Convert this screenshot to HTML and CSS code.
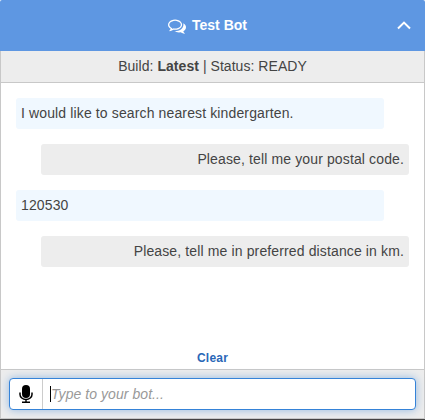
FILE: index.html
```html
<!DOCTYPE html>
<html lang="en">
<head>
<meta charset="utf-8">
<title>Test Bot</title>
<link rel="stylesheet" href="styles.css">
</head>
<body>
<div class="widget">
  <header class="header">
    <svg class="chat-icon" viewBox="0 0 1792 1792"><path d="M704 384q-153 0-286 52t-211.500 141-78.500 191q0 82 53 158t149 132l97 56-35 84q34-20 62-39l44-31 53 10q78 14 153 14 153 0 286-52t211.500-141 78.500-191-78.500-191-211.500-141-286-52zm0-128q191 0 353.500 68.500t256.500 186.500 94 257-94 257-256.500 186.500-353.500 68.500q-86 0-176-16-124 88-278 128-36 9-86 16h-3q-11 0-20.500-8t-11.500-21q-1-3-1-6.500t.5-6.500 2-6l2.500-5 3.500-5.500 4-5 4.500-5 4-4.500q5-6 23-25t26-29.500 22.500-29 25-38.500 20.500-44q-124-72-195-177t-71-224q0-139 94-257t256.500-186.500 353.500-68.500zm822 1169q10 24 20.500 44t25 38.500 22.500 29 26 29.500 23 25q1 1 4 4.500t4.500 5 4 5 3.500 5.500l2.500 5 2 6 .5 6.500-1 6.500q-3 14-13 22t-22 7q-50-7-86-16-154-40-278-128-90 16-176 16-271 0-472-132 58 4 88 4 161 0 309-45t264-129q125-92 192-212t67-254q0-77-23-152 129 71 204 178t75 230q0 120-71 224.500t-195 176.500z"/></svg>
    <span class="title">Test Bot</span>
    <svg class="chevron" viewBox="0 0 14 9"><path d="M1 7.500 7 1.600l6 5.900"/></svg>
  </header>
  <div class="status">Build: <b>Latest</b> | Status: READY</div>
  <main class="messages">
    <div class="message user">I would like to search nearest kindergarten.</div>
    <div class="message bot">Please, tell me your postal code.</div>
    <div class="message user number">120530</div>
    <div class="message bot">Please, tell me in preferred distance in km.</div>
    <a class="clear">Clear</a>
  </main>
  <footer class="footer">
    <div class="input">
      <div class="mic"><svg viewBox="0 0 14 19"><rect x="3" y="0" width="8" height="13" rx="4"/><path class="stand" d="M1 7.500v2a6 5 0 0 0 12 0v-2M7 14.500v3M3 17.300h8"/></svg></div>
      <div class="field"><span class="caret"></span>Type to your bot...</div>
    </div>
  </footer>
</div>
</body>
</html>
```
FILE: styles.css
```css
* { box-sizing: border-box; }
body {
  margin: 0;
  background: #fff;
  color: #444;
  font: 14px/21px "Liberation Sans", Arial, sans-serif;
  overflow: hidden;
}
.widget {
  display: flex;
  flex-direction: column;
  width: 425px;
  height: 420px;
  border-bottom: 1px solid #444;
}
.header {
  display: grid;
  grid-template-columns: 18px 1fr 14px;
  column-gap: 6px;
  align-items: center;
  height: 51px;
  padding: 0 14px 0 168px;
  background: #5e97e2;
  color: #fff;
  border-radius: 2px 2px 0 0;
}
.chat-icon { width: 18px; height: 18px; fill: #fff; }
.title { font-weight: bold; line-height: 20px; padding-bottom: 1px; }
.chevron { width: 14px; height: 9px; fill: none; stroke: #fff; stroke-width: 2; }
.status {
  height: 32px;
  padding-top: 5px;
  text-align: center;
  letter-spacing: .05px;
  background: #ededed;
  border: 1px solid #c8c8c8;
  border-top: 0;
}
.messages {
  display: flex;
  flex-direction: column;
  gap: 15px;
  flex: 1;
  padding: 15px 15px 0;
  border: solid #c8c8c8;
  border-width: 0 1px;
}
.message {
  width: 368px;
  height: 31px;
  padding: 5px;
  border-radius: 3px;
  letter-spacing: .13px;
}
.user { background: #f0f8ff; }
.bot { align-self: flex-end; background: #ededed; text-align: right; }
.clear {
  margin-top: auto;
  align-self: center;
  color: #2a67b7;
  font-size: 12px;
  font-weight: bold;
  letter-spacing: .2px;
}
.footer {
  height: 50px;
  padding: 8px;
  background: #ededed;
  border: 1px solid #c8c8c8;
}
.input {
  display: flex;
  height: 32px;
  background: #fff;
  border: 1px solid #3583d8;
  border-radius: 4px;
  box-shadow: 0 0 8px rgba(53, 131, 216, .5);
}
.mic {
  display: flex;
  justify-content: center;
  align-items: center;
  width: 33px;
  border-right: 1px solid #ccc;
}
.mic svg { width: 14px; height: 19px; }
.stand { fill: none; stroke: #000; stroke-width: 1.500; }
.field {
  display: flex;
  align-items: center;
  padding-left: 7px;
  color: #999;
  letter-spacing: .06px;
  font-style: italic;
}
.caret { width: 1px; height: 16px; background: #000; }
```
